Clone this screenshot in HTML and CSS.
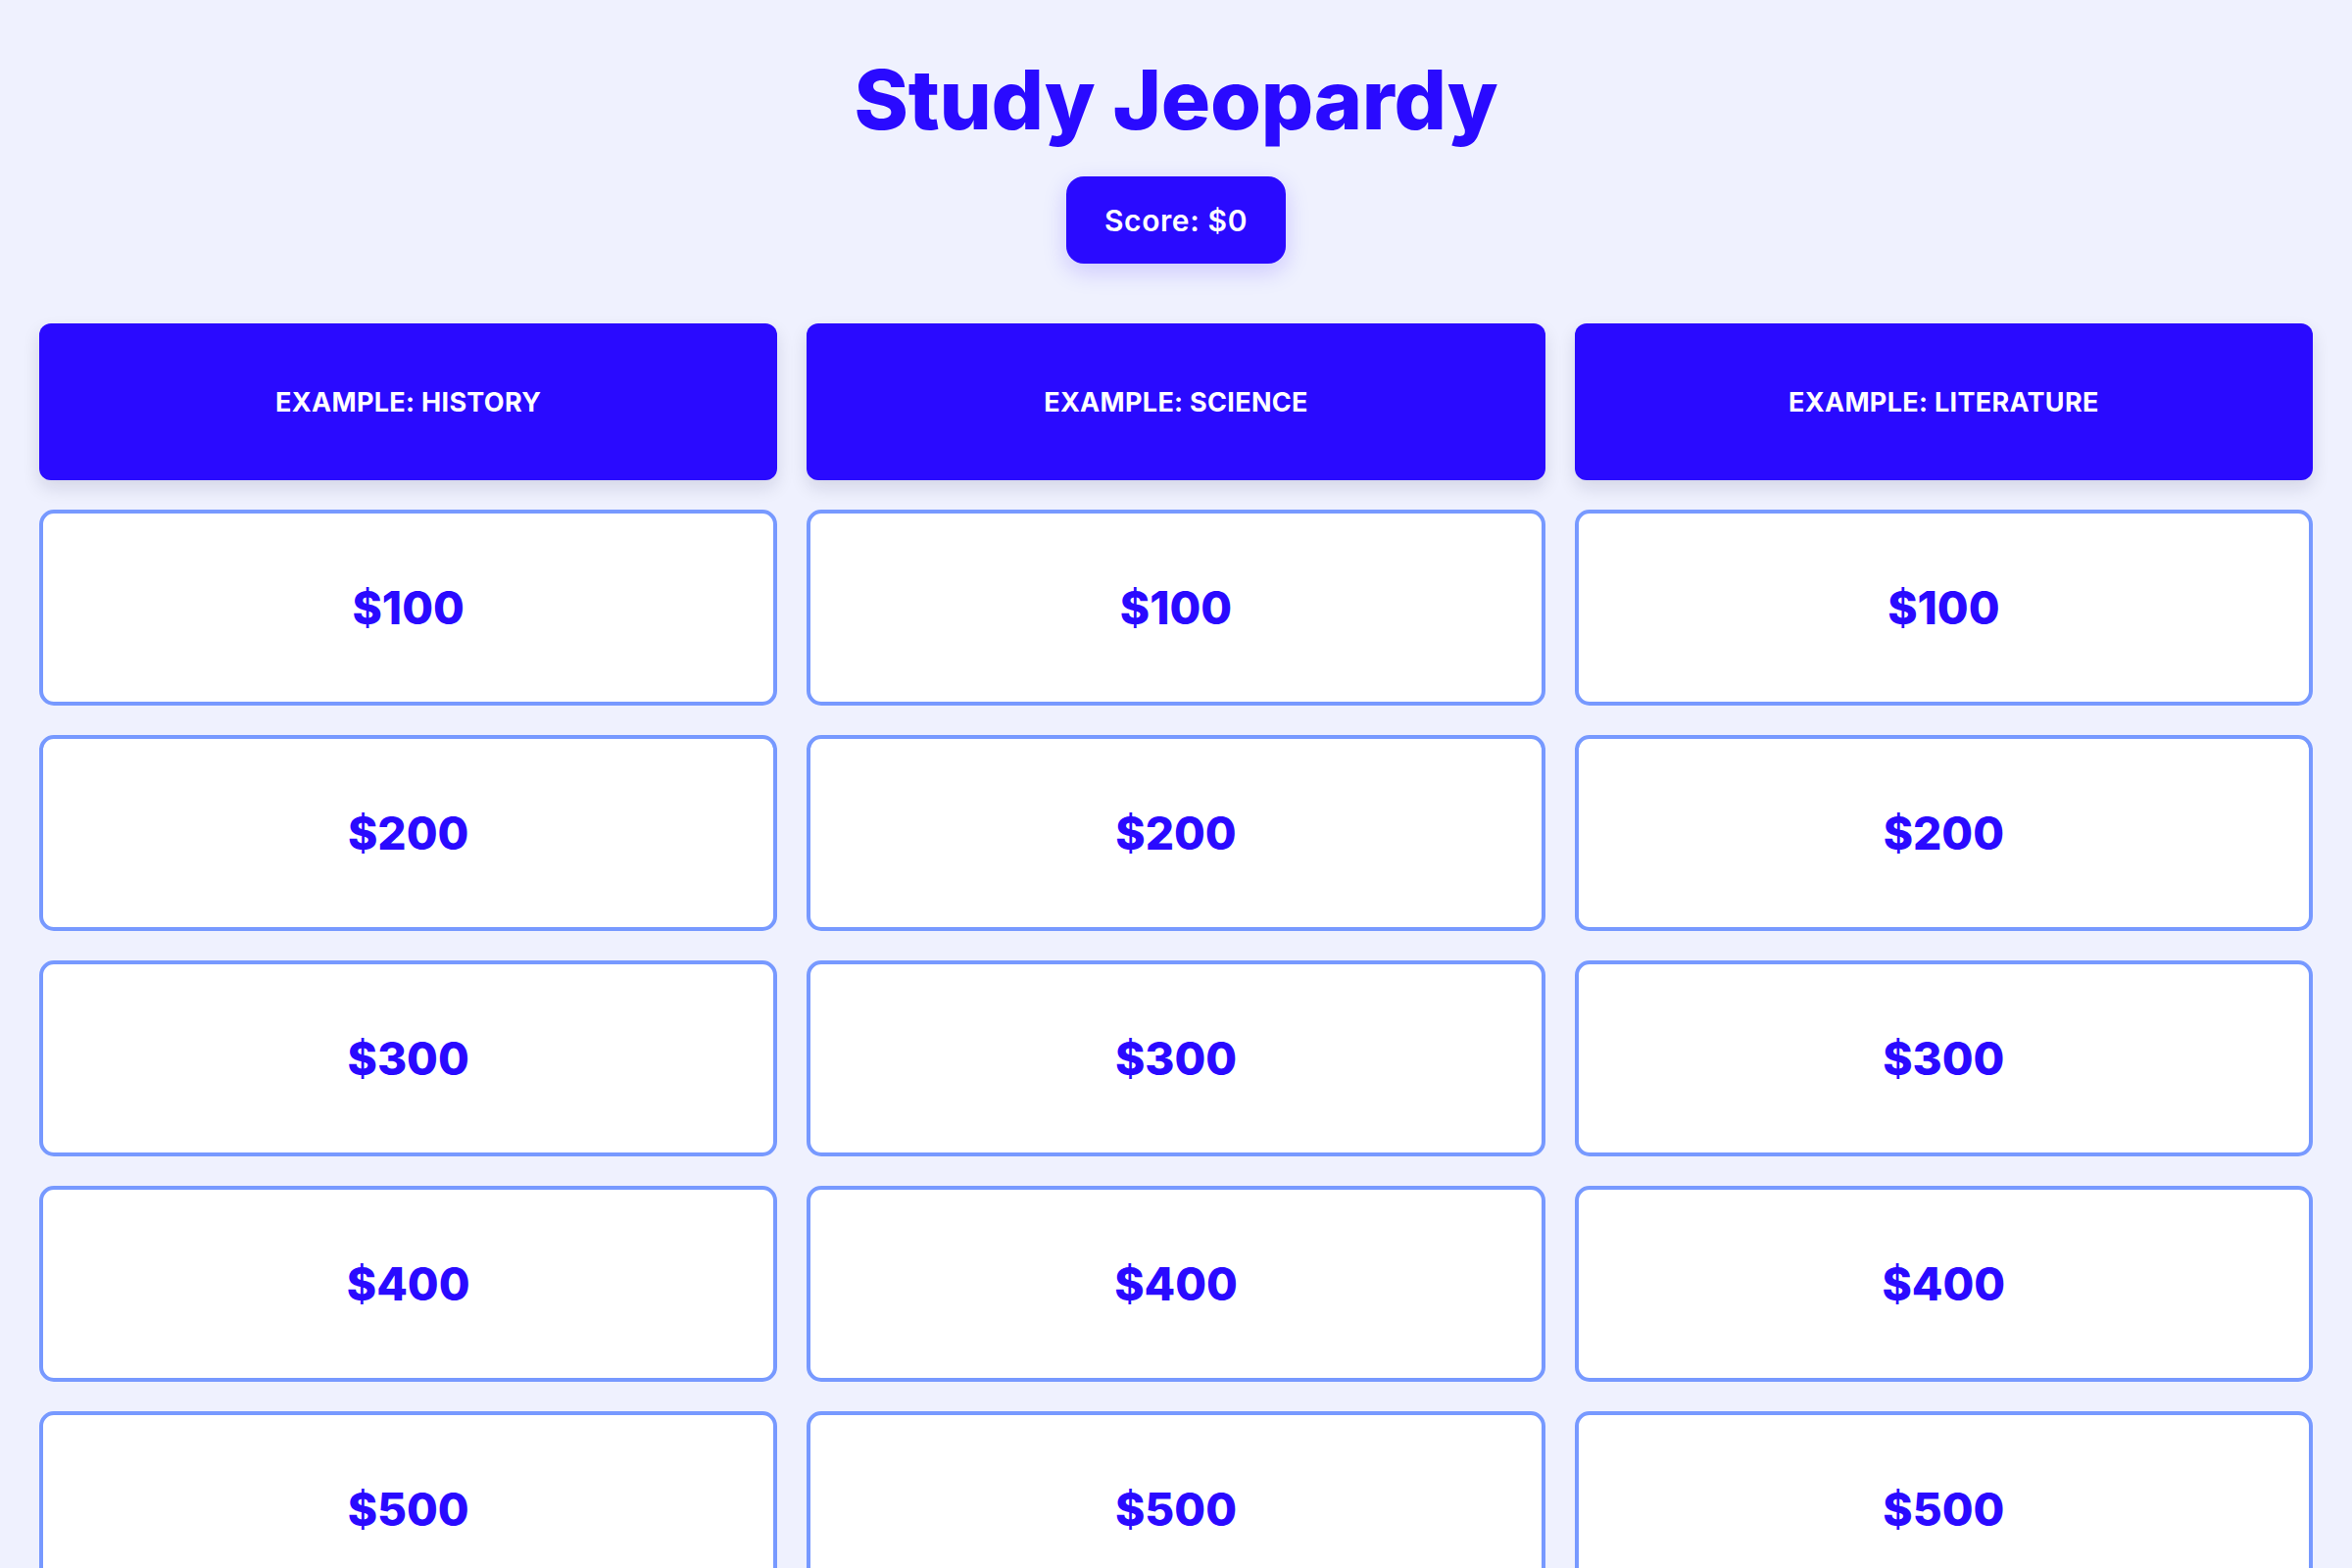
FILE: index.html
```html
<!DOCTYPE html>
<html lang="en">
<head>
<meta charset="utf-8">
<title>Study Jeopardy</title>
<link rel="stylesheet" href="styles.css">
</head>
<body>
<main class="page">
  <header class="top">
    <h1 class="title">Study Jeopardy</h1>
    <div class="score">Score: $0</div>
  </header>

  <section class="board">
    <div class="column">
      <div class="category">Example: History</div>
      <button class="clue">$100</button>
      <button class="clue">$200</button>
      <button class="clue">$300</button>
      <button class="clue">$400</button>
      <button class="clue">$500</button>
    </div>
    <div class="column">
      <div class="category">Example: Science</div>
      <button class="clue">$100</button>
      <button class="clue">$200</button>
      <button class="clue">$300</button>
      <button class="clue">$400</button>
      <button class="clue">$500</button>
    </div>
    <div class="column">
      <div class="category">Example: Literature</div>
      <button class="clue">$100</button>
      <button class="clue">$200</button>
      <button class="clue">$300</button>
      <button class="clue">$400</button>
      <button class="clue">$500</button>
    </div>
  </section>
</main>
</body>
</html>
```

FILE: styles.css
```css
html, body {
  margin: 0;
  padding: 0;
  background: #eff1fe;
}

body {
  font-family: Inter, "Noto Sans", "DejaVu Sans", sans-serif;
  color: #2a0aff;
}

.page {
  padding: 54px 40px 40px;
}

.top {
  display: flex;
  flex-direction: column;
  align-items: center;
}

.title {
  margin: 0;
  font-size: 84px;
  line-height: 96px;
  font-weight: 800;
  letter-spacing: -0.3px;
  color: #2a0aff;
}

.score {
  margin-top: 30px;
  height: 89px;
  padding: 0 39px;
  display: flex;
  align-items: center;
  box-sizing: border-box;
  background: #2a0aff;
  color: #ffffff;
  font-size: 30px;
  font-weight: 600;
  letter-spacing: 0.6px;
  border-radius: 18px;
  box-shadow: 0 8px 24px rgba(42, 10, 255, 0.18);
}

.board {
  margin-top: 61px;
  display: grid;
  grid-template-columns: repeat(3, 1fr);
  column-gap: 30px;
}

.column {
  display: flex;
  flex-direction: column;
  gap: 30px;
}

.category {
  height: 160px;
  display: flex;
  align-items: center;
  justify-content: center;
  background: #2a0aff;
  color: #ffffff;
  border-radius: 12px;
  font-size: 27px;
  font-weight: 700;
  text-transform: uppercase;
  letter-spacing: 0.3px;
  box-shadow: 0 8px 18px rgba(20, 20, 60, 0.12);
}

.clue {
  height: 200px;
  box-sizing: border-box;
  background: #ffffff;
  border: 4px solid #7799ff;
  border-radius: 15px;
  font-family: inherit;
  font-size: 46px;
  font-weight: 800;
  color: #2a0aff;
  cursor: pointer;
  padding: 0;
}
```
